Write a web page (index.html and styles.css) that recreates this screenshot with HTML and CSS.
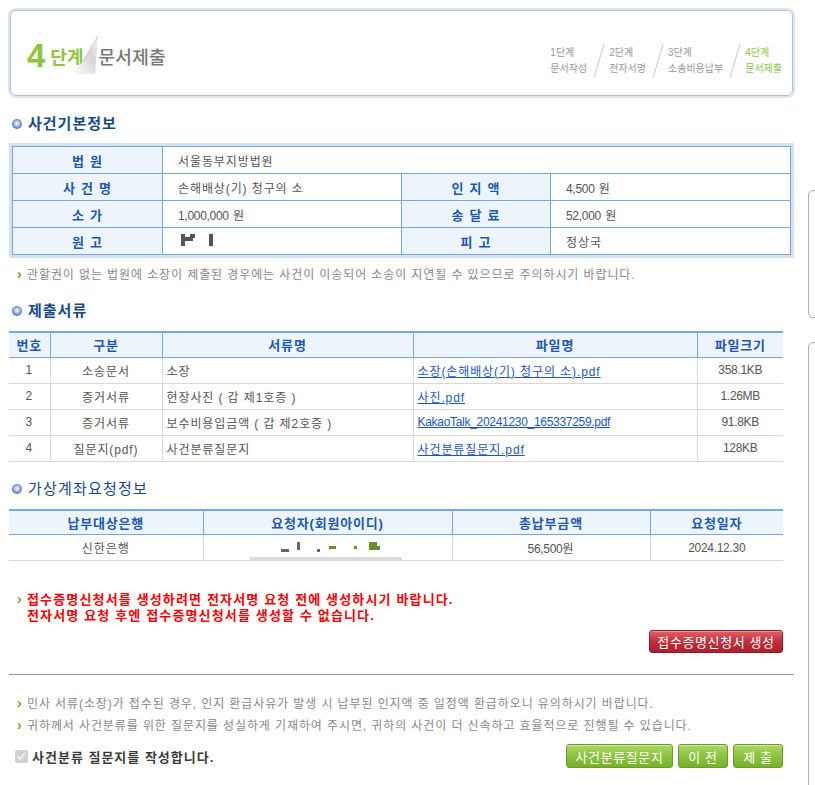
FILE: index.html
```html
<!DOCTYPE html>
<html lang="ko">
<head>
    <meta charset="UTF-8">
    <title>문서제출</title>
    <link rel="stylesheet" href="styles.css">
</head>
<body>
<div class="page">
    <div class="main">
        <div class="stephead">
            <div class="steptitle">
                <span class="num">4</span><span class="dan">단계</span>
                <svg class="fold" width="30" height="40" viewBox="0 0 30 40">
                    <defs>
                        <linearGradient id="fg" x1="0" y1="1" x2="1" y2="0">
                            <stop offset="0" stop-color="#ffffff"/>
                            <stop offset="0.6" stop-color="#d6d6d6"/>
                            <stop offset="1" stop-color="#f4f4f4"/>
                        </linearGradient>
                    </defs>
                    <polygon points="1,38 12,25 27,0 24,38" fill="url(#fg)"/>
                    <line x1="27" y1="0" x2="12" y2="25" stroke="#cfcfcf" stroke-width="1"/>
                </svg>
                <span class="name">문서제출</span>
            </div>
            <div class="steps">
                <div class="step">1단계<br>문서작성</div>
                <svg class="sep" width="12" height="34"><line x1="11" y1="0" x2="1" y2="34" stroke="#c8c8c8"/></svg>
                <div class="step">2단계<br>전자서명</div>
                <svg class="sep" width="12" height="34"><line x1="11" y1="0" x2="1" y2="34" stroke="#c8c8c8"/></svg>
                <div class="step">3단계<br>소송비용납부</div>
                <svg class="sep" width="12" height="34"><line x1="11" y1="0" x2="1" y2="34" stroke="#c8c8c8"/></svg>
                <div class="step on">4단계<br>문서제출</div>
            </div>
        </div>

        <h2 class="tit first">사건기본정보</h2>
        <div class="infobox">
            <table class="info">
                <colgroup><col style="width:150px"><col style="width:239px"><col style="width:149px"><col></colgroup>
                <tr>
                    <th>법 원</th>
                    <td colspan="3">서울동부지방법원</td>
                </tr>
                <tr>
                    <th>사 건 명</th>
                    <td>손해배상(기) 청구의 소</td>
                    <th>인 지 액</th>
                    <td><span class="en">4,500</span> 원</td>
                </tr>
                <tr>
                    <th>소 가</th>
                    <td><span class="en">1,000,000</span> 원</td>
                    <th>송 달 료</th>
                    <td><span class="en">52,000</span> 원</td>
                </tr>
                <tr>
                    <th>원 고</th>
                    <td class="redact">
                        <svg width="80" height="26">
                            <rect x="18" y="6" width="4" height="12" fill="#555"/>
                            <rect x="22" y="9" width="8" height="4" fill="#555"/>
                            <rect x="27" y="6" width="5" height="4" fill="#555"/>
                            <rect x="46" y="6" width="4" height="12" fill="#555"/>
                        </svg>
                    </td>
                    <th>피 고</th>
                    <td>정상국</td>
                </tr>
            </table>
        </div>
        <p class="note">관할권이 없는 법원에 소장이 제출된 경우에는 사건이 이송되어 소송이 지연될 수 있으므로 주의하시기 바랍니다.</p>

        <h2 class="tit">제출서류</h2>
        <table class="list">
            <colgroup><col style="width:41px"><col style="width:112px"><col style="width:251px"><col style="width:284px"><col></colgroup>
            <tr>
                <th>번호</th><th>구분</th><th>서류명</th><th>파일명</th><th>파일크기</th>
            </tr>
            <tr>
                <td>1</td><td>소송문서</td><td class="left">소장</td>
                <td class="left"><a href="#">소장(손해배상(기) 청구의 소).pdf</a></td><td class="en">358.1KB</td>
            </tr>
            <tr>
                <td>2</td><td>증거서류</td><td class="left">현장사진 ( 갑 제1호증 )</td>
                <td class="left"><a href="#">사진.pdf</a></td><td class="en">1.26MB</td>
            </tr>
            <tr>
                <td>3</td><td>증거서류</td><td class="left">보수비용입금액 ( 갑 제2호증 )</td>
                <td class="left"><a href="#" class="en">KakaoTalk_20241230_165337259.pdf</a></td><td class="en">91.8KB</td>
            </tr>
            <tr>
                <td>4</td><td>질문지(pdf)</td><td class="left">사건분류질문지</td>
                <td class="left"><a href="#">사건분류질문지.pdf</a></td><td class="en">128KB</td>
            </tr>
        </table>

        <h2 class="tit thin">가상계좌요청정보</h2>
        <table class="list">
            <colgroup><col style="width:194px"><col style="width:248px"><col style="width:198px"><col></colgroup>
            <tr>
                <th>납부대상은행</th><th>요청자(회원아이디)</th><th>총납부금액</th><th>요청일자</th>
            </tr>
            <tr>
                <td>신한은행</td>
                <td class="redact">
                    <svg width="248" height="25">
                        <rect x="77" y="14" width="8" height="3" fill="#666"/>
                        <rect x="93" y="7" width="3" height="8" fill="#666"/>
                        <rect x="113" y="14" width="3" height="3" fill="#666"/>
                        <rect x="125" y="11" width="7" height="3" fill="#6b9322"/>
                        <rect x="150" y="11" width="3" height="3" fill="#6b9322"/>
                        <rect x="165" y="7" width="8" height="8" fill="#6b9322"/>
                        <rect x="173" y="11" width="3" height="4" fill="#777"/>
                        <rect x="46" y="22" width="152" height="3" fill="#dcdcdc"/>
                    </svg>
                </td>
                <td><span class="en">56,500</span>원</td>
                <td class="en">2024.12.30</td>
            </tr>
        </table>

        <div class="warn">
            <p>접수증명신청서를 생성하려면 전자서명 요청 전에 생성하시기 바랍니다.</p>
            <p>전자서명 요청 후엔 접수증명신청서를 생성할 수 없습니다.</p>
        </div>
        <div class="btnrow">
            <button class="btn red">접수증명신청서 생성</button>
        </div>

        <hr class="line">

        <div class="notes">
            <p class="note">민사 서류(소장)가 접수된 경우, 인지 환급사유가 발생 시 납부된 인지액 중 일정액 환급하오니 유의하시기 바랍니다.</p>
            <p class="note">귀하께서 사건분류를 위한 질문지를 성실하게 기재하여 주시면, 귀하의 사건이 더 신속하고 효율적으로 진행될 수 있습니다.</p>
        </div>

        <div class="bottom">
            <label class="chk"><input type="checkbox" checked disabled>사건분류 질문지를 작성합니다.</label>
            <div class="btns">
                <button class="btn green wide">사건분류질문지</button>
                <button class="btn green">이 전</button>
                <button class="btn green">제 출</button>
            </div>
        </div>
    </div>

    <div class="side">
        <div class="sbox s1"></div>
        <div class="sbox s2"></div>
    </div>
</div>
</body>
</html>
```

FILE: styles.css
```css
*
{
    box-sizing: border-box;
}

body
{
    margin: 0;
    background: #fff;
    font-family: "Liberation Sans", "Noto Sans CJK KR", sans-serif;
    font-size: 12px;
    letter-spacing: 0.9px;
    color: #555;
    overflow: hidden;
}

.en
{
    letter-spacing: -0.3px;
}

.page
{
    display: flex;
    align-items: flex-start;
}

.main
{
    width: 785px;
    margin-left: 9px;
    flex-shrink: 0;
}

/* top step box */
.stephead
{
    margin: 10px 1px 0 1px;
    height: 86px;
    border: 1px solid #a9c5db;
    border-radius: 6px;
    box-shadow: 0 0 0 2px #d9e6f0;
    display: flex;
    justify-content: space-between;
    align-items: flex-end;
    padding: 0 10px 22px 16px;
    letter-spacing: 0;
}

.steptitle
{
    display: flex;
    align-items: flex-end;
    height: 40px;
}

.steptitle .num
{
    font-size: 33px;
    font-weight: bold;
    color: #8cc63f;
    line-height: 33px;
    margin-bottom: 1px;
}

.steptitle .dan
{
    font-size: 18px;
    font-weight: bold;
    color: #8cc63f;
    line-height: 22px;
    margin-left: 5px;
    margin-bottom: 4px;
}

.steptitle .fold
{
    margin-left: -12px;
    margin-bottom: -3px;
}

.steptitle .name
{
    font-size: 18px;
    font-weight: 500;
    color: #777;
    line-height: 22px;
    margin-left: -3px;
    margin-bottom: 4px;
    letter-spacing: 0.3px;
}

.steps
{
    display: flex;
    align-items: center;
    margin-bottom: -5px;
}

.step
{
    font-size: 10px;
    line-height: 16px;
    letter-spacing: 0;
    color: #999;
}

.step.on
{
    color: #8cc63f;
}

.sep
{
    margin: 0 4px 0 6px;
}

/* section titles */
.tit
{
    margin: 17px 0 10px 3px;
    height: 20px;
    line-height: 20px;
    font-size: 15px;
    font-weight: bold;
    letter-spacing: 1px;
    color: #17498a;
    display: flex;
    align-items: center;
}

.tit.first
{
    margin-top: 18px;
    margin-bottom: 9px;
}

.tit.thin
{
    font-weight: normal;
    letter-spacing: 1.2px;
}

.tit::before
{
    content: "";
    width: 10px;
    height: 10px;
    border-radius: 50%;
    background: radial-gradient(circle at 50% 45%, #ffffff 0, #c4d2f0 25%, #5b7cc6 65%, #2a4891 100%);
    margin-right: 6px;
}

/* basic info table */
.infobox
{
    background: #d6e3ee;
    padding: 3px;
}

.info
{
    width: 100%;
    border-collapse: collapse;
    background: #fff;
}

.info th,
.info td
{
    border: 1px solid #77a6e2;
    height: 27px;
    padding: 0;
}

.info th
{
    background: #eef4fb;
    color: #1b58b6;
    font-size: 13px;
    font-weight: bold;
    letter-spacing: 1.2px;
    white-space: pre;
}

.info td
{
    padding-left: 15px;
    color: #555;
}

.info td.redact
{
    padding: 0;
}

.info td.redact svg
{
    display: block;
}

.note
{
    margin: 7px 0 0 0;
    padding-left: 18px;
    line-height: 18px;
    color: #888;
}

.note::before
{
    content: "›";
    display: inline-block;
    width: 10px;
    margin-left: -10px;
    color: #6fa81d;
    font-weight: bold;
    font-size: 14px;
}

/* list tables */
.list
{
    width: 774px;
    border-collapse: collapse;
}

.list th
{
    background: #eef4fb;
    color: #1b58b6;
    font-size: 13px;
    font-weight: bold;
    letter-spacing: 0.8px;
    height: 25px;
    padding: 0;
    border-top: 2px solid #77a6e2;
    border-bottom: 1px solid #77a6e2;
    border-left: 1px solid #77a6e2;
}

.list td
{
    height: 26px;
    padding: 0;
    text-align: center;
    border-bottom: 1px solid #d8d8d8;
    border-left: 1px solid #d8d8d8;
    color: #555;
}

.list th:first-child,
.list td:first-child
{
    border-left: 0;
}

.list td.left
{
    text-align: left;
    padding-left: 4px;
}

.list td.redact
{
    padding: 0;
}

.list td.redact svg
{
    display: block;
}

.list a
{
    color: #1a55d0;
}

/* warning */
.warn
{
    margin-top: 30px;
    padding-left: 18px;
    color: #ff0000;
    font-size: 13px;
    font-weight: bold;
    letter-spacing: 1.15px;
    line-height: 16px;
}

.warn p
{
    margin: 0;
}

.warn p:first-child::before
{
    content: "›";
    display: inline-block;
    width: 10px;
    margin-left: -10px;
    color: #6fa81d;
    font-size: 14px;
}

.btnrow
{
    display: flex;
    justify-content: flex-end;
    width: 774px;
    margin-top: 6px;
}

.btn
{
    font-family: "Liberation Sans", "Noto Sans CJK KR", sans-serif;
    font-size: 13px;
    letter-spacing: 0.6px;
    color: #fff;
    height: 24px;
    padding: 0;
    border-radius: 3px;
    cursor: pointer;
}

.btn.red
{
    width: 134px;
    height: 23px;
    border: 1px solid #8d1b22;
    background: linear-gradient(#e2606a, #c1303b 50%, #ad1f2b);
    box-shadow: inset 0 1px 0 rgba(255,255,255,.35);
}

.line
{
    margin: 21px 0 0 0;
    border: 0;
    border-top: 1px solid #999;
    height: 0;
}

.notes
{
    margin-top: 18px;
}

.notes .note
{
    margin: 0;
    line-height: 21px;
}

.bottom
{
    display: flex;
    justify-content: space-between;
    align-items: center;
    width: 774px;
    margin-top: 7px;
}

.chk
{
    display: flex;
    align-items: center;
    font-size: 13px;
    font-weight: bold;
    letter-spacing: 1px;
    color: #3a3a3a;
    padding-left: 6px;
}

.chk input
{
    width: 13px;
    height: 13px;
    margin: 0 4px 0 0;
}

.btns
{
    display: flex;
    gap: 5px;
}

.btn.green
{
    width: 50px;
    border: 1px solid #6a9b2a;
    background: linear-gradient(#aed866, #8cc43f 50%, #78b02c);
    box-shadow: inset 0 1px 0 rgba(255,255,255,.4);
}

.btn.green.wide
{
    width: 107px;
}

/* right side panels cut by the window */
.side
{
    margin-left: 14px;
    width: 200px;
    flex-shrink: 0;
}

.sbox
{
    border: 1px solid #b3b3b3;
    border-radius: 5px;
    box-shadow: 1px 1px 2px rgba(0,0,0,.12);
    background: #fff;
}

.s1
{
    margin-top: 190px;
    height: 128px;
}

.s2
{
    margin-top: 24px;
    height: 470px;
}
```
